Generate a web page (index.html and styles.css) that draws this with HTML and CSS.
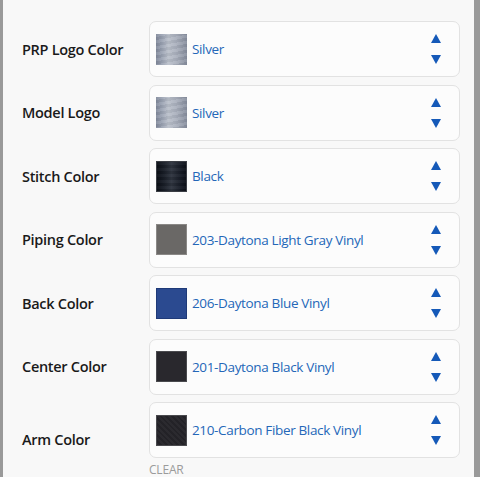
FILE: index.html
```html
<!DOCTYPE html>
<html>
<head>
	<meta charset="utf-8">
	<title>Seat Options</title>
	<link rel="stylesheet" href="styles.css">
</head>
<body>
  <div class="panel">
    <div class="options">

      <div class="option">
        <span class="option-label">PRP Logo Color</span>
        <div class="picker">
          <span class="swatch swatch-silver"></span>
          <span class="picker-value">Silver</span>
          <span class="arrows">
            <svg width="10" height="9" viewBox="0 0 10 9"><path d="M5 0 L10 9 L0 9 Z"/></svg>
            <svg width="10" height="9" viewBox="0 0 10 9"><path d="M0 0 L10 0 L5 9 Z"/></svg>
          </span>
        </div>
      </div>

      <div class="option">
        <span class="option-label">Model Logo</span>
        <div class="picker">
          <span class="swatch swatch-silver"></span>
          <span class="picker-value">Silver</span>
          <span class="arrows">
            <svg width="10" height="9" viewBox="0 0 10 9"><path d="M5 0 L10 9 L0 9 Z"/></svg>
            <svg width="10" height="9" viewBox="0 0 10 9"><path d="M0 0 L10 0 L5 9 Z"/></svg>
          </span>
        </div>
      </div>

      <div class="option">
        <span class="option-label">Stitch Color</span>
        <div class="picker">
          <span class="swatch swatch-thread-black"></span>
          <span class="picker-value">Black</span>
          <span class="arrows">
            <svg width="10" height="9" viewBox="0 0 10 9"><path d="M5 0 L10 9 L0 9 Z"/></svg>
            <svg width="10" height="9" viewBox="0 0 10 9"><path d="M0 0 L10 0 L5 9 Z"/></svg>
          </span>
        </div>
      </div>

      <div class="option">
        <span class="option-label">Piping Color</span>
        <div class="picker">
          <span class="swatch swatch-gray"></span>
          <span class="picker-value">203-Daytona Light Gray Vinyl</span>
          <span class="arrows">
            <svg width="10" height="9" viewBox="0 0 10 9"><path d="M5 0 L10 9 L0 9 Z"/></svg>
            <svg width="10" height="9" viewBox="0 0 10 9"><path d="M0 0 L10 0 L5 9 Z"/></svg>
          </span>
        </div>
      </div>

      <div class="option">
        <span class="option-label">Back Color</span>
        <div class="picker">
          <span class="swatch swatch-blue"></span>
          <span class="picker-value">206-Daytona Blue Vinyl</span>
          <span class="arrows">
            <svg width="10" height="9" viewBox="0 0 10 9"><path d="M5 0 L10 9 L0 9 Z"/></svg>
            <svg width="10" height="9" viewBox="0 0 10 9"><path d="M0 0 L10 0 L5 9 Z"/></svg>
          </span>
        </div>
      </div>

      <div class="option">
        <span class="option-label">Center Color</span>
        <div class="picker">
          <span class="swatch swatch-black"></span>
          <span class="picker-value">201-Daytona Black Vinyl</span>
          <span class="arrows">
            <svg width="10" height="9" viewBox="0 0 10 9"><path d="M5 0 L10 9 L0 9 Z"/></svg>
            <svg width="10" height="9" viewBox="0 0 10 9"><path d="M0 0 L10 0 L5 9 Z"/></svg>
          </span>
        </div>
      </div>

      <div class="option">
        <span class="option-label">Arm Color</span>
        <div class="picker-group">
          <div class="picker">
            <span class="swatch swatch-carbon"></span>
            <span class="picker-value">210-Carbon Fiber Black Vinyl</span>
            <span class="arrows">
              <svg width="10" height="9" viewBox="0 0 10 9"><path d="M5 0 L10 9 L0 9 Z"/></svg>
              <svg width="10" height="9" viewBox="0 0 10 9"><path d="M0 0 L10 0 L5 9 Z"/></svg>
            </span>
          </div>
          <a class="clear-link">CLEAR</a>
        </div>
      </div>

    </div>
  </div>
</body>
</html>
```

FILE: styles.css
```css
html, body {
	margin: 0;
	height: 100%;
}

body {
	background-color: #f8f8f8;
	font-family: 'Open Sans', 'Noto Sans', sans-serif;
	color: #1f1f1f;
}

.panel {
	min-height: 100%;
	box-sizing: border-box;
	border-left: 3px solid #9a9a9a;
	border-right: 6px solid #9a9a9a;
	background-color: #f8f8f8;
	padding: 21px 14px 0 19px;
}

.options {
	display: flex;
	flex-direction: column;
	gap: 7.5px;
}

.option {
	display: grid;
	grid-template-columns: 127px 1fr;
	align-items: center;
}

.option-label {
	font-size: 14.5px;
	font-weight: 600;
	letter-spacing: -0.3px;
	color: #1a1a1a;
}

.picker {
	display: flex;
	align-items: center;
	height: 56px;
	box-sizing: border-box;
	border: 1px solid #e2e2e2;
	border-radius: 7px;
	background-color: #fcfcfc;
	padding: 0 18px 0 6px;
}

.swatch {
	width: 31px;
	height: 31px;
	box-sizing: border-box;
	flex: none;
	margin-right: 5px;
}

.picker-value {
	flex: 1;
	font-size: 13.5px;
	letter-spacing: -0.35px;
	color: #2467b8;
}

.arrows {
	display: flex;
	flex-direction: column;
	gap: 12px;
}

.arrows svg {
	display: block;
	fill: #1559b8;
}

.clear-link {
	display: block;
	margin-top: 5px;
	font-size: 12px;
	letter-spacing: -0.2px;
	color: #9b9b9b;
	line-height: 14px;
}

/* thread spools */
.swatch-silver {
	background:
		repeating-linear-gradient(170deg, rgba(255,255,255,0.08) 0 3px, rgba(0,0,0,0.04) 3px 6px),
		linear-gradient(90deg, #80889a 0%, #9aa2b2 20%, #b9bfca 40%, #a9afbc 65%, #858c9c 100%);
}

.swatch-thread-black {
	border: 1px solid #3a3d44;
	background:
		repeating-linear-gradient(180deg, rgba(255,255,255,0.03) 0 3px, rgba(0,0,0,0.08) 3px 6px),
		linear-gradient(90deg, #0b0f16 0%, #1a1f29 25%, #2f3540 50%, #1c212c 75%, #0d1119 100%);
}

/* vinyl samples */
.swatch-gray {
	border: 1px solid #8a8886;
	background-color: #6a6866;
}

.swatch-blue {
	border: 1px solid #1f3a78;
	background-color: #2b4a90;
}

.swatch-black {
	border: 1px solid #4a4a4e;
	background-color: #29282d;
}

.swatch-carbon {
	border: 1px solid #4a4a4e;
	background:
		repeating-linear-gradient(45deg, #2b2a2f 0 2px, #232227 2px 4px);
}
```
